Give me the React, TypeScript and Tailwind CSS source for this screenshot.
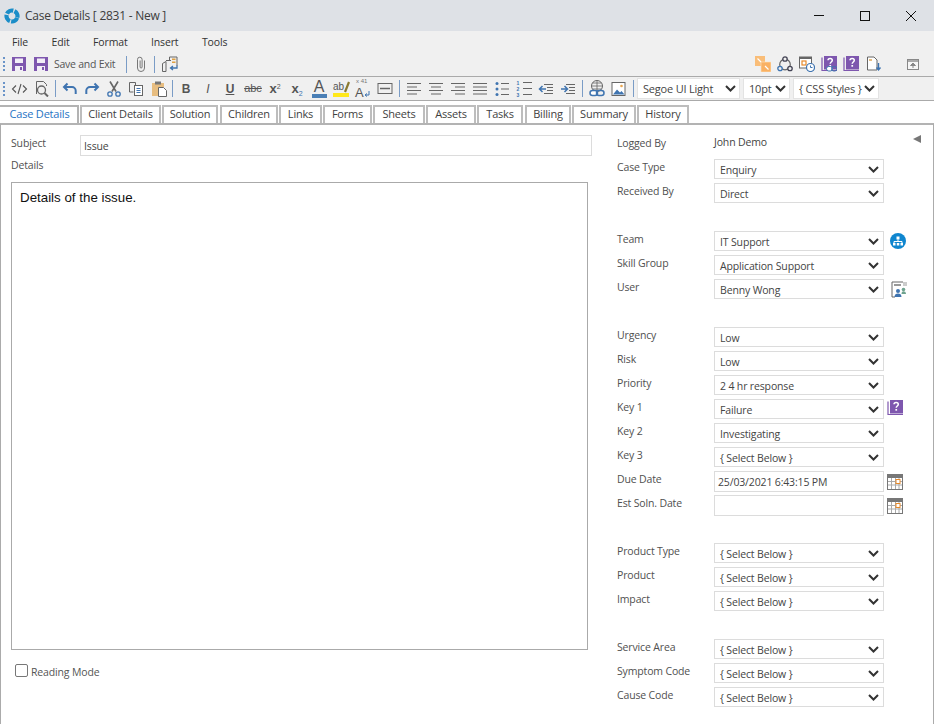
import React from "react";

const BLUE = "#3f74b0";

function Sv({ w = 16, h = 16, children }: { w?: number; h?: number; children: React.ReactNode }) {
  return (
    <svg width={w} height={h} viewBox={`0 0 ${w} ${h}`} fill="none" className="block shrink-0">
      {children}
    </svg>
  );
}

const Save = () => (
  <Sv>
    <rect x="1" y="1" width="14" height="14" fill="#7e57ae" />
    <rect x="4" y="2.500" width="8" height="4.500" fill="#f2eef7" />
    <rect x="4" y="10" width="8" height="5" fill="#f2eef7" />
    <rect x="9" y="11" width="2" height="3" fill="#7e57ae" />
  </Sv>
);
const Clip = () => (
  <Sv w={12}>
    <path d="M9.500 4.500v7.500a3.500 3.500 0 0 1-7 0V3.500a2.300 2.300 0 0 1 4.600 0V11a1 1 0 0 1-2 0V4.500" stroke="#777" strokeWidth="1" />
  </Sv>
);
const DocsBack = () => (
  <Sv w={18}>
    <path d="M1.500 7.500l3.500-2v10h-3.500zM5 4.500h5M8.500 1h7.500v9M8.500 1v4" stroke="#666" strokeWidth="1" />
    <rect x="11" y="2.500" width="3.500" height="1.500" fill="#e0a040" />
    <rect x="11" y="5.500" width="3.500" height="1.500" fill="#e0a040" />
    <path d="M16 9.500v2.500h-6M12 10l-2.500 2 2.500 2" stroke={BLUE} strokeWidth="1.300" />
  </Sv>
);
const Code = () => (
  <Sv w={17}>
    <path d="M5 4.500L1.500 8 5 11.500M12 4.500L15.500 8 12 11.500M10 3L7 13" stroke="#555" strokeWidth="1.100" />
  </Sv>
);
const Preview = () => (
  <Sv>
    <path d="M2.500 13V.5h7l3 3V5" stroke="#666" strokeWidth="1" />
    <circle cx="7.500" cy="9" r="4" stroke="#666" strokeWidth="1.300" />
    <path d="M10.500 12l3.500 3.500" stroke="#666" strokeWidth="2" />
  </Sv>
);
const Undo = () => (
  <Sv>
    <path d="M5.500 2.500L2 6l3.500 3.500" stroke={BLUE} strokeWidth="2" />
    <path d="M2.500 6H10a3.700 3.700 0 0 1 3.700 3.700V13" stroke={BLUE} strokeWidth="2" />
  </Sv>
);
const Redo = () => (
  <Sv>
    <path d="M10.500 2.500L14 6l-3.500 3.500" stroke={BLUE} strokeWidth="2" />
    <path d="M13.500 6H6a3.700 3.700 0 0 0-3.700 3.700V13" stroke={BLUE} strokeWidth="2" />
  </Sv>
);
const Cut = () => (
  <Sv>
    <path d="M4 .5l6 10M12 .5L6 10.500" stroke="#666" strokeWidth="1.600" />
    <circle cx="4" cy="13" r="2.200" stroke={BLUE} strokeWidth="1.300" />
    <circle cx="12" cy="13" r="2.200" stroke={BLUE} strokeWidth="1.300" />
  </Sv>
);
const Copy = () => (
  <Sv>
    <path d="M1.500 1.500h6l0 3M1.500 1.500v9.500h4" stroke="#666" strokeWidth="1" />
    <rect x="6.500" y="4.500" width="8" height="10" fill="#fff" stroke="#666" />
    <path d="M8.500 7.500h4M8.500 9.500h4M8.500 11.500h4" stroke={BLUE} strokeWidth="1" />
  </Sv>
);
const Paste = () => (
  <Sv>
    <rect x="1" y="2" width="12" height="13" fill="#e7bd80" />
    <rect x="4" y=".5" width="6" height="3" fill="#777" />
    <path d="M7.500 6.500h5l3 3v6h-8z" fill="#fff" stroke="#666" />
  </Sv>
);
const Bold = ({ t, cls }: { t: string; cls: string }) => (
  <span className={`[font-family:Liberation_Sans,Arial,sans-serif] leading-none text-[#555] ${cls}`}>{t}</span>
);
const Sup = () => (
  <span className="[font-family:Liberation_Sans,Arial,sans-serif] text-[13px] font-bold leading-none text-[#555] whitespace-nowrap">
    x<span className="relative -top-[4px] text-[7px] font-normal">2</span>
  </span>
);
const Sub = () => (
  <span className="[font-family:Liberation_Sans,Arial,sans-serif] text-[13px] font-bold leading-none text-[#555] whitespace-nowrap">
    x<span className="relative top-[3px] text-[7px] font-normal text-[#3f74b0]">2</span>
  </span>
);
const ColorA = () => (
  <span className="flex flex-col items-center w-[15px]">
    <span className="[font-family:Liberation_Sans,Arial,sans-serif] text-[16px] leading-[14px] text-[#555]">A</span>
    <span className="w-[15px] h-[4px] bg-[#4a7fb5]" />
  </span>
);
const HighlightAb = () => (
  <span className="flex flex-col w-[16px] h-[16px]">
    <span className="flex items-center h-[12px]">
      <span className="[font-family:Liberation_Sans,Arial,sans-serif] text-[10px] leading-[10px] text-[#555]">ab</span>
      <svg width="6" height="12" viewBox="0 0 6 12" fill="none" className="shrink-0">
        <path d="M1 11l4-10" stroke="#8a7a30" strokeWidth="2.200" />
      </svg>
    </span>
    <span className="h-[4px] w-[16px] bg-[#ffe81a]" />
  </span>
);
const FontSize = () => (
  <span className="flex flex-col w-[16px] h-[22px]">
    <span className="[font-family:Liberation_Sans,Arial,sans-serif] text-[6px] leading-[7px] h-[7px] text-[#777] pl-[1px] whitespace-nowrap">x 41</span>
    <span className="flex items-end h-[15px]">
      <span className="[font-family:Liberation_Sans,Arial,sans-serif] text-[13px] leading-[15px] text-[#555]">A</span>
      <svg width="6" height="8" viewBox="0 0 6 8" fill="none" className="shrink-0 mb-[2px]">
        <path d="M5 1v4H1.500M3 3.500L1 5l2 1.500" stroke={BLUE} strokeWidth="1" />
      </svg>
    </span>
  </span>
);
const Hr = () => (
  <Sv>
    <rect x="1" y="2.500" width="14" height="10" stroke="#666" />
    <path d="M3 7.500h10" stroke="#666" strokeWidth="1.500" />
  </Sv>
);
const Align = ({ lines }: { lines: [number, number][] }) => (
  <Sv>
    {lines.map(([a, b], i) => (
      <path key={i} d={`M${a} ${2.5 + i * 3.5}H${b}`} stroke="#666" strokeWidth="1" />
    ))}
  </Sv>
);
const Bullets = () => (
  <Sv w={14}>
    {[2.500, 8, 13.500].map((y) => (
      <g key={y}>
        <circle cx="2" cy={y} r="1.500" fill={BLUE} />
        <path d={`M6 ${y}h8`} stroke="#666" />
      </g>
    ))}
  </Sv>
);
const Numbers = () => (
  <span className="flex flex-col w-[15px]">
    {[1, 2, 3].map((n) => (
      <span key={n} className="flex items-center h-[6px]">
        <span className="[font-family:Liberation_Sans,Arial,sans-serif] w-[5px] text-[5px] leading-[6px] font-bold text-[#3f74b0]">{n}</span>
        <span className="ml-[1px] w-[9px] h-[1px] bg-[#666]" />
      </span>
    ))}
  </span>
);
const Outdent = () => (
  <Sv>
    <path d="M6 3.500h9M6 12.500h9M9 6.500h6M9 9.500h6" stroke="#666" />
    <path d="M8 8H1.500M4.500 5L1.500 8l3 3" stroke={BLUE} strokeWidth="1.500" />
  </Sv>
);
const Indent = () => (
  <Sv>
    <path d="M6 3.500h9M6 12.500h9M9 6.500h6M9 9.500h6" stroke="#666" />
    <path d="M1 8h6.500M4.500 5l3 3-3 3" stroke={BLUE} strokeWidth="1.500" />
  </Sv>
);
const Link = () => (
  <Sv h={17}>
    <circle cx="8" cy="6" r="5.500" stroke="#666" />
    <path d="M8 .5v11M2.500 6h11M3.500 3h9M3.500 9h9" stroke="#666" strokeWidth=".8" />
    <rect x="1" y="10.500" width="7.500" height="5" rx="2.500" fill="#fff" stroke={BLUE} strokeWidth="1.500" />
    <rect x="7.500" y="10.500" width="7.500" height="5" rx="2.500" stroke={BLUE} strokeWidth="1.500" />
  </Sv>
);
const Img = () => (
  <Sv>
    <rect x="1" y="1.500" width="13" height="13" fill="#fff" stroke="#666" />
    <circle cx="10.500" cy="5" r="1.300" fill="#e9a64f" />
    <path d="M2 13.500l4-5 3 3 1.500-1.500 3 3.500z" fill={BLUE} />
  </Sv>
);

const OrangeCollapse = () => (
  <Sv>
    <rect x="0" y="0" width="10" height="10" fill="#f9bd78" />
    <rect x="6" y="6" width="10" height="10" fill="#f9b163" stroke="#fde3c0" strokeWidth=".6" />
    <path d="M2.500 2.500l3.500 3.500M13.500 13.500l-3.500-3.500" stroke="#fff" strokeWidth="1.200" />
  </Sv>
);
const Share = () => (
  <Sv>
    <circle cx="8" cy="8.500" r="5.300" stroke="#666" strokeWidth="1.200" />
    <circle cx="8" cy="3" r="2.200" fill="#f0f0f0" stroke="#445" strokeWidth="1.300" />
    <circle cx="3" cy="12.500" r="2.200" fill="#f0f0f0" stroke={BLUE} strokeWidth="1.300" />
    <circle cx="13" cy="12.500" r="2.200" fill="#f0f0f0" stroke="#445" strokeWidth="1.300" />
  </Sv>
);
const CalClock = () => (
  <Sv>
    <rect x=".5" y="1" width="12" height="11" fill="#fff" stroke="#666" />
    <rect x=".5" y="1" width="12" height="2" fill="#666" />
    <rect x="3" y="5" width="4" height="4" stroke="#e88a2a" strokeWidth="1.200" />
    <circle cx="11.500" cy="11.500" r="4" fill="#fff" stroke={BLUE} strokeWidth="1.200" />
    <path d="M11.500 9.500v2h2" stroke={BLUE} />
  </Sv>
);
const Book = ({ link = false }: { link?: boolean }) => (
  <Sv>
    <path d="M1 1.500V14.500h15" stroke="#7e57ae" strokeWidth="1.200" />
    <rect x="3" y="0" width="13" height="13.500" fill="#7e57ae" />
    <path d="M7 4.300c0-2.500 4.300-2.500 4.300 0 0 1.700-2.100 1.700-2.100 3.500" stroke="#fff" strokeWidth="1.500" />
    <rect x="8.400" y="9" width="1.700" height="1.700" fill="#fff" />
    {link && (
      <g>
        <rect x="5.500" y="10.500" width="6" height="4.500" rx="2.200" fill="#fff" stroke={BLUE} />
        <rect x="10.500" y="10.500" width="5.500" height="4.500" rx="2.200" stroke={BLUE} />
      </g>
    )}
  </Sv>
);
const DocDown = () => (
  <Sv>
    <path d="M1.500 1H8l3 3v10H1.500z" fill="#fff" stroke="#666" />
    <rect x="3" y="3" width="3" height="2" fill="#e7bd80" />
    <path d="M12.500 7v6.500M10.500 11.500l2 2.500 2-2.500" stroke={BLUE} strokeWidth="1.400" />
  </Sv>
);
const Restore = () => (
  <Sv w={12} h={11}>
    <rect x=".5" y=".5" width="11" height="10" fill="#f6f6f6" stroke="#888" />
    <rect x="1" y="1" width="10" height="2" fill="#aaa" />
    <path d="M6 4l-2.500 2.500h5zM6 6v3" stroke="#888" fill="#888" />
  </Sv>
);

const Chevron = () => (
  <svg width="11" height="7" viewBox="0 0 11 7" fill="none" className="shrink-0">
    <path d="M1 1l4.500 4.500L10 1" stroke="#333" strokeWidth="2" />
  </svg>
);

const Sep = ({ ml }: { ml: string }) => <span className={`w-[1px] h-[17px] bg-[#7a9cc6] shrink-0 ${ml}`} />;
const Grip = () => (
  <span className="flex flex-col gap-[2px] w-[2px] shrink-0">
    {[0, 1, 2, 3].map((i) => (
      <span key={i} className="w-[2px] h-[2px] bg-[#6a94c8]" />
    ))}
  </span>
);
const B = ({ children, cls = "" }: { children: React.ReactNode; cls?: string }) => (
  <span className={`w-[22px] h-[22px] flex items-center justify-center shrink-0 ${cls}`}>{children}</span>
);
const TbSelect = ({ w, text, ml = "" }: { w: string; text: string; ml?: string }) => (
  <div className={`h-[21px] ${w} ${ml} bg-white border border-[#e3e3e3] flex items-center justify-between pl-[5px] pr-[3px] text-[11px] tracking-[-0.2px] text-[#444] shrink-0`}>
    <span className="whitespace-nowrap relative top-[1px]">{text}</span>
    <Chevron />
  </div>
);

const tabs: [string, string][] = [
  ["Client Details", "w-[81px] ml-[1px]"],
  ["Solution", "w-[56px] ml-[1px]"],
  ["Children", "w-[58px] ml-[2px]"],
  ["Links", "w-[43px] ml-[1px]"],
  ["Forms", "w-[49px] ml-[1px]"],
  ["Sheets", "w-[52px] ml-[1px]"],
  ["Assets", "w-[50px] ml-[1px]"],
  ["Tasks", "w-[46px] ml-[1px]"],
  ["Billing", "w-[46px] ml-[2px]"],
  ["Summary", "w-[64px] ml-[1px]"],
  ["History", "w-[52px] ml-[1px]"],
];

const Select = ({ text }: { text: string }) => (
  <div className="w-[170px] h-[20px] mt-[1px] bg-white border border-[#dcdcdc] flex items-center justify-between pl-[5px] pr-[4px] text-[10.500px] tracking-[-0.15px] text-[#444] shrink-0">
    <span className="whitespace-nowrap relative top-[2px]">{text}</span>
    <Chevron />
  </div>
);
const DateBox = ({ text }: { text: string }) => (
  <div className="w-[170px] h-[21px] mt-[1px] bg-white border border-[#dcdcdc] flex items-center pl-[3px] text-[10.500px] tracking-[-0.15px] text-[#444] shrink-0">
    <span className="whitespace-nowrap relative top-[1px]">{text}</span>
  </div>
);
const Row = ({ label, children }: { label: string; children: React.ReactNode }) => (
  <div className="h-[24px] flex items-start">
    <span className="w-[97px] shrink-0 leading-[16px] mt-[1px] text-[#505050] text-[10.500px] tracking-[-0.15px] whitespace-nowrap">{label}</span>
    {children}
  </div>
);
const Gap = () => <div className="h-[24px]" />;

const Calendar = () => (
  <span className="ml-[3px] mt-[4px] block">
    <Sv>
      <rect x=".5" y=".5" width="15" height="15" fill="#fff" stroke="#777" />
      <rect x="0" y="0" width="16" height="4" fill="#777" />
      <path d="M4.500 4v11M8.500 4v11M12 4v11M1 7.500h14M1 11h14" stroke="#aaa" />
      <rect x="9" y="5.500" width="4" height="4" fill="#fff" stroke="#e88a2a" />
    </Sv>
  </span>
);
const TeamIcon = () => (
  <span className="ml-[6px] mt-[3px] block">
    <Sv>
      <circle cx="8" cy="8" r="8" fill="#0f86cf" />
      <rect x="6.500" y="3.500" width="3" height="3" fill="#fff" />
      <path d="M8 6.500v2M4 10.500v-2h8v2" stroke="#fff" />
      <rect x="3" y="10" width="2.500" height="2.500" fill="#fff" />
      <rect x="6.800" y="10" width="2.500" height="2.500" fill="#fff" />
      <rect x="10.500" y="10" width="2.500" height="2.500" fill="#fff" />
    </Sv>
  </span>
);
const UserIcon = () => (
  <span className="ml-[7px] mt-[3px] block">
    <Sv h={17}>
      <path d="M1 1h11M1 1v15h3" stroke="#666" />
      <rect x="3" y="3" width="7" height="2" fill="#999" />
      <path d="M13 1v4M15 1v4" stroke="#999" />
      <circle cx="7" cy="10" r="2" fill={BLUE} />
      <path d="M3.500 16c0-2.500 1.500-3.500 3.500-3.500s3.500 1 3.500 3.500z" fill={BLUE} />
      <circle cx="12.500" cy="8.500" r="1.800" fill="#6fa38f" />
      <path d="M10.500 13c0-2 1-2.700 2-2.700s2.500.7 2.500 2.700z" fill="#6fa38f" />
    </Sv>
  </span>
);

export default function App() {
  return (
    <div className="w-[934px] h-[724px] overflow-hidden bg-white flex flex-col [font-family:Open_Sans,sans-serif]">
      {/* title */}
      <div className="h-[31px] bg-[#dee1e6] flex items-center shrink-0 pl-[4px]">
        <svg width="16" height="16" viewBox="0 0 16 16" fill="none" className="shrink-0">
          <circle cx="8" cy="8" r="5.500" stroke="#1a8dc8" strokeWidth="4.200" strokeDasharray="7.300 1.340" transform="rotate(20 8 8)" />
        </svg>
        <span className="ml-[5px] text-[12px] tracking-[-0.25px] text-[#3c3c3c] whitespace-nowrap">Case Details [ 2831 - New ]</span>
        <div className="ml-auto flex items-center">
          <span className="w-[46px] h-[31px] flex items-center justify-center">
            <span className="w-[10px] h-[1px] bg-[#111]" />
          </span>
          <span className="w-[46px] h-[31px] flex items-center justify-center">
            <span className="w-[10px] h-[10px] border border-[#111]" />
          </span>
          <span className="w-[46px] h-[31px] flex items-center justify-center">
            <svg width="10" height="10" viewBox="0 0 10 10"><path d="M0 0l10 10M10 0L0 10" stroke="#111" /></svg>
          </span>
        </div>
      </div>
      {/* menu */}
      <div className="h-[21px] bg-[#f0f0f0] flex items-center gap-[23.500px] pl-[12px] pt-[2px] text-[10.500px] tracking-[-0.15px] text-[#333] shrink-0">
        {["File", "Edit", "Format", "Insert", "Tools"].map((m) => (
          <span key={m}>{m}</span>
        ))}
      </div>
      {/* toolbar 1 */}
      <div className="h-[24px] bg-[#f0f0f0] flex items-center pl-[3px] shrink-0">
        <Grip />
        <span className="ml-[6px]"><Save /></span>
        <span className="ml-[6px]"><Save /></span>
        <span className="ml-[5px] text-[10.500px] tracking-[-0.25px] text-[#555] whitespace-nowrap relative top-[1px]">Save and Exit</span>
        <Sep ml="ml-[11px]" />
        <span className="ml-[8px]"><Clip /></span>
        <Sep ml="ml-[7px]" />
        <span className="ml-[6px]"><DocsBack /></span>
        <div className="ml-auto flex items-center pr-[15px]">
          <OrangeCollapse />
          <span className="ml-[6px]"><Share /></span>
          <span className="ml-[6px]"><CalClock /></span>
          <span className="ml-[6px]"><Book link /></span>
          <span className="ml-[6px]"><Book /></span>
          <span className="ml-[7px]"><DocDown /></span>
          <span className="ml-[25px]"><Restore /></span>
        </div>
      </div>
      {/* toolbar 2 */}
      <div className="h-[25px] bg-[#f0f0f0] border-y border-y-[#aaaaaa] flex items-center pl-[3px] shrink-0">
        <Grip />
        <B cls="ml-[3px]"><Code /></B>
        <B cls="ml-[1px]"><Preview /></B>
        <Sep ml="ml-[2px]" />
        <B cls="ml-[3px]"><Undo /></B>
        <B><Redo /></B>
        <B><Cut /></B>
        <B><Copy /></B>
        <B cls="ml-[1px]"><Paste /></B>
        <Sep ml="ml-[2px]" />
        <B cls="ml-[2px]"><Bold t="B" cls="font-bold text-[12px]" /></B>
        <B><Bold t="I" cls="italic text-[12px]" /></B>
        <B><Bold t="U" cls="underline font-bold text-[12px]" /></B>
        <B cls="ml-[1px]"><Bold t="abc" cls="line-through text-[11px]" /></B>
        <B><Sup /></B>
        <B><Sub /></B>
        <B><ColorA /></B>
        <B><HighlightAb /></B>
        <B><FontSize /></B>
        <B><Hr /></B>
        <Sep ml="ml-[3px]" />
        <B cls="ml-[3px]"><Align lines={[[1, 15], [1, 11], [1, 15], [1, 11]]} /></B>
        <B><Align lines={[[1, 15], [3, 13], [1, 15], [3, 13]]} /></B>
        <B><Align lines={[[1, 15], [5, 15], [1, 15], [5, 15]]} /></B>
        <B><Align lines={[[1, 15], [1, 15], [1, 15], [1, 15]]} /></B>
        <B><Bullets /></B>
        <B><Numbers /></B>
        <B><Outdent /></B>
        <B><Indent /></B>
        <Sep ml="ml-[3px]" />
        <B cls="ml-[3px]"><Link /></B>
        <B><Img /></B>
        <Sep ml="ml-[3px]" />
        <TbSelect w="w-[103px]" text="Segoe UI Light" ml="ml-[3px]" />
        <TbSelect w="w-[47px]" text="10pt" ml="ml-[3px]" />
        <TbSelect w="w-[86px]" text="{ CSS Styles }" ml="ml-[3px]" />
      </div>
      {/* tabs */}
      <div className="h-[22px] flex items-end shrink-0 bg-white text-[11px] tracking-[-0.2px] text-[#3f3f3f]">
        <span className="w-[79px] h-[20px] -mb-[2px] pb-[3px] pl-[2px] relative bg-white border-[2px] border-l-0 border-b-0 border-[#b3b3b3] flex items-center justify-center text-[#1f74c4] whitespace-nowrap shrink-0">
          Case Details
        </span>
        {tabs.map(([t, c]) => (
          <span key={t} className={`${c} h-[18px] pb-[1px] border-[2px] border-b-0 border-[#bdbdbd] flex items-center justify-center whitespace-nowrap shrink-0`}>
            {t}
          </span>
        ))}
      </div>
      {/* panel */}
      <div className="flex-1 border-t-2 border-t-[#b3b3b3] border-x border-x-[#ababab] flex min-h-0 relative">
        <div className="w-[616px] shrink-0 pl-[10px] flex flex-col">
          <div className="flex h-[22px] mt-[10px] items-start">
            <span className="w-[69px] text-[10.500px] tracking-[-0.15px] text-[#505050] leading-[16px]">Subject</span>
            <div className="w-[512px] h-[21px] border border-[#dcdcdc] pl-[3px] pt-[2px] flex items-center text-[10.500px] tracking-[-0.15px] text-[#444]">
              Issue
            </div>
          </div>
          <span className="text-[10.500px] tracking-[-0.15px] text-[#505050] leading-[16px] h-[25px]">Details</span>
          <div className="w-[577px] h-[468px] border border-[#aaaaaa] pl-[8px] pt-[6px] [font-family:Liberation_Sans,Arial,sans-serif] text-[13.330px] text-[#111] leading-[18px]">
            Details of the issue.
          </div>
          <div className="flex items-center mt-[13px] ml-[4px]">
            <span className="w-[13px] h-[13px] rounded-[2px] border border-[#777] bg-white shrink-0" />
            <span className="ml-[3px] text-[10.500px] tracking-[-0.15px] text-[#555] relative top-[2px]">Reading Mode</span>
          </div>
        </div>
        <div className="flex flex-col pt-[9px]">
          <Row label="Logged By">
            <span className="text-[10.500px] tracking-[-0.15px] text-[#444] leading-[16px]">John Demo</span>
          </Row>
          <Row label="Case Type"><Select text="Enquiry" /></Row>
          <Row label="Received By"><Select text="Direct" /></Row>
          <Gap />
          <Row label="Team"><Select text="IT Support" /><TeamIcon /></Row>
          <Row label="Skill Group"><Select text="Application Support" /></Row>
          <Row label="User"><Select text="Benny Wong" /><UserIcon /></Row>
          <Gap />
          <Row label="Urgency"><Select text="Low" /></Row>
          <Row label="Risk"><Select text="Low" /></Row>
          <Row label="Priority"><Select text="2 4 hr response" /></Row>
          <Row label="Key 1">
            <Select text="Failure" />
            <span className="ml-[3px] mt-[2px]"><Book /></span>
          </Row>
          <Row label="Key 2"><Select text="Investigating" /></Row>
          <Row label="Key 3"><Select text="{ Select Below }" /></Row>
          <Row label="Due Date"><DateBox text="25/03/2021 6:43:15 PM" /><Calendar /></Row>
          <Row label="Est Soln. Date"><DateBox text="" /><Calendar /></Row>
          <Gap />
          <Row label="Product Type"><Select text="{ Select Below }" /></Row>
          <Row label="Product"><Select text="{ Select Below }" /></Row>
          <Row label="Impact"><Select text="{ Select Below }" /></Row>
          <Gap />
          <Row label="Service Area"><Select text="{ Select Below }" /></Row>
          <Row label="Symptom Code"><Select text="{ Select Below }" /></Row>
          <Row label="Cause Code"><Select text="{ Select Below }" /></Row>
        </div>
        <span className="absolute left-[912px] top-[10px] w-0 h-0 border-y-[4px] border-y-transparent border-r-[8px] border-r-[#777]" />
      </div>
    </div>
  );
}
